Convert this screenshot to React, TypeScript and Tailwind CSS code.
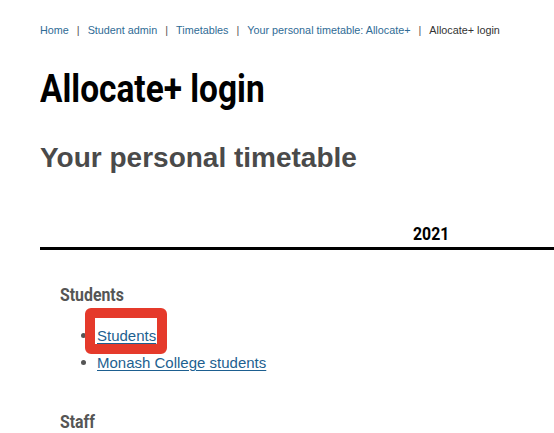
import React from "react";

const cond = "font-['Roboto',sans-serif] font-bold inline-block origin-left scale-x-[0.88]";

export default function App() {
  return (
    <div className="min-h-[433px] w-[554px] bg-white font-['Liberation_Sans',Arial,sans-serif] overflow-hidden">
      <div className="pl-10">
        <nav className="pt-[22px] flex items-center text-[10.8px] leading-4 text-[#2f6b95]">
          <span>Home</span>
          <span className="mx-[8px] text-[#555]">|</span>
          <span>Student admin</span>
          <span className="mx-[8px] text-[#555]">|</span>
          <span>Timetables</span>
          <span className="mx-[8px] text-[#555]">|</span>
          <span>Your personal timetable: Allocate+</span>
          <span className="mx-[8px] text-[#555]">|</span>
          <span className="text-[#333]">Allocate+ login</span>
        </nav>
        <h1 className="mt-[32px] text-[38px] leading-[38px] text-black">
          <span className={cond}>Allocate+ login</span>
        </h1>
        <h2 className="mt-[36px] text-[28px] leading-[28px] font-bold text-[#4a4a4a]">Your personal timetable</h2>
        <div className="mt-[53px] border-b-[3px] border-black pb-[4px] pl-[373px] text-[18px] leading-[18px] text-black">
          <span className={cond}>2021</span>
        </div>
        <div className="pl-5">
          <h3 className="mt-[36px] text-[18px] leading-[18px] text-[#555]">
            <span className={cond}>Students</span>
          </h3>
          <ul className="mt-[18px] text-[15px] leading-[27px]">
            <li className="flex items-center">
              <span className="ml-[21px] w-[5px] h-[5px] rounded-full bg-[#555]"></span>
              <span className="relative ml-[11px]">
                <span className="absolute left-[-12px] top-[-14px] w-[82px] h-[46px] rounded-[6px] border-[10px] border-[#e53a2b] bg-white"></span>
                <a className="relative text-[#1d5f90] underline underline-offset-2">Students</a>
              </span>
            </li>
            <li className="flex items-center">
              <span className="ml-[21px] w-[5px] h-[5px] rounded-full bg-[#555]"></span>
              <a className="ml-[11px] text-[#1d5f90] underline underline-offset-2">Monash College students</a>
            </li>
          </ul>
          <h3 className="mt-[37px] text-[18px] leading-[18px] text-[#555]">
            <span className={cond}>Staff</span>
          </h3>
        </div>
      </div>
    </div>
  );
}
